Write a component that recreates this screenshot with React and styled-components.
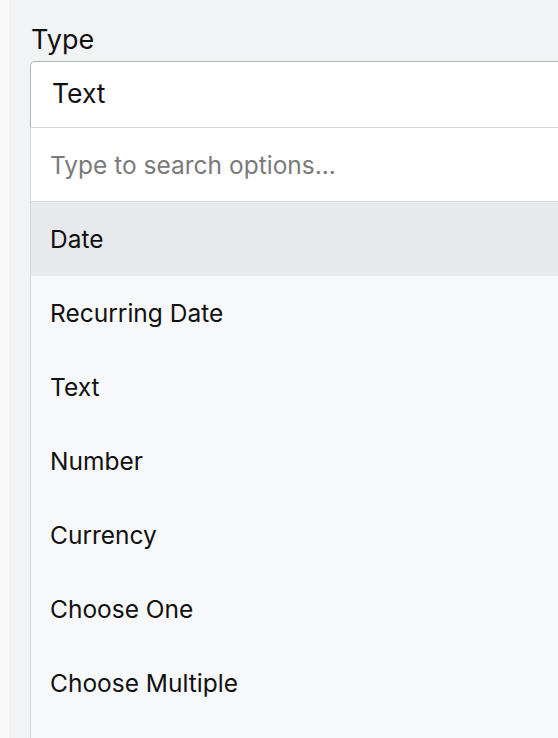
import React from 'react';
import styled, { createGlobalStyle } from 'styled-components';

const GlobalStyle = createGlobalStyle`
  html, body {
    margin: 0;
    padding: 0;
    background: #f9f9fa;
    font-family: Inter, "Liberation Sans", Arial, sans-serif;
  }
`;

const Page = styled.div`
  margin-left: 9px;
  height: 738px;
  overflow: hidden;
  background: #f2f3f5;
  padding: 23px 0 0 21px;
  box-sizing: border-box;
  display: flex;
  flex-direction: column;
`;

const Label = styled.div`
  font-size: 27px;
  line-height: 34px;
  color: #111;
  margin: 0 0 4px 1px;
`;

const Field = styled.div`
  flex: 1;
  display: flex;
  flex-direction: column;
  width: calc(100% + 20px);
`;

const Input = styled.div`
  height: 66px;
  flex-shrink: 0;
  box-sizing: border-box;
  border: 1px solid #b5b5b8;
  border-bottom: none;
  border-radius: 5px 0 0 0;
  background: #fff;
  display: flex;
  align-items: center;
  padding: 0 0 4px 21px;
  font-size: 26.5px;
  color: #111;
`;

const Menu = styled.div`
  flex: 1;
  border-left: 1px solid #d6d8dc;
  border-top: 1px solid #d6d8dc;
  background: #f7f8fa;
`;

const Search = styled.div`
  height: 74px;
  box-sizing: border-box;
  border-bottom: 1px solid #d6d8dc;
  background: #fff;
  display: flex;
  align-items: center;
  padding-left: 19px;
  font-size: 24.5px;
  color: #7a7a7c;
`;

const Option = styled.div`
  height: 74px;
  display: flex;
  align-items: center;
  padding-left: 19px;
  font-size: 24.5px;
  color: #111;
  background: ${p => (p.$active ? '#e8e9ec' : 'transparent')};
`;

const options = [
  'Date',
  'Recurring Date',
  'Text',
  'Number',
  'Currency',
  'Choose One',
  'Choose Multiple',
];

export default function App() {
  return (
    <>
      <GlobalStyle />
      <Page>
        <Label>Type</Label>
        <Field>
          <Input>Text</Input>
          <Menu>
            <Search>Type to search options...</Search>
            {options.map((o, i) => (
              <Option key={o} $active={i === 0}>{o}</Option>
            ))}
          </Menu>
        </Field>
      </Page>
    </>
  );
}
